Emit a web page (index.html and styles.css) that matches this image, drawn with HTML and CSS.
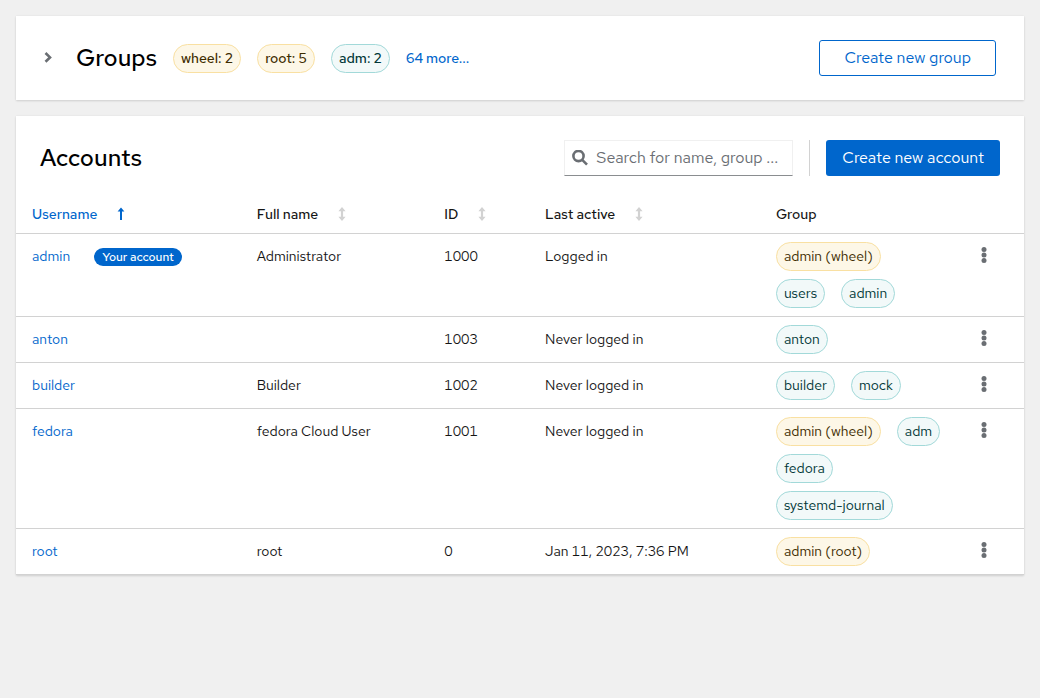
FILE: index.html
```html
<!DOCTYPE html>
<html lang="en">
<head>
<meta charset="utf-8">
<meta name="viewport" content="width=device-width, initial-scale=1">
<title>Accounts</title>
<link rel="stylesheet" href="styles.css">
</head>
<body>
<svg class="sprite" aria-hidden="true">
  <symbol id="sort" viewBox="0 0 8 16"><path d="M4 0 7.6 4.2H5.1V9.8H7.6L4 14 .4 9.8H2.9V4.2H.4z"/></symbol>
  <symbol id="sort-up" viewBox="0 0 8 16"><path d="M4 0.4 7.4 4.4H5V13H3V4.4H0.6z"/></symbol>
  <symbol id="kebab" viewBox="0 0 6 20"><circle cx="3" cy="3.5" r="2.5"/><circle cx="3" cy="9" r="2.5"/><circle cx="3" cy="14.5" r="2.5"/></symbol>
</svg>
<main class="page">
  <section class="card groups">
    <button class="toggle" type="button" aria-label="Show groups"><svg viewBox="0 0 8 12"><path d="M1.5 1 6 5.4 1.5 9.8"/></svg></button>
    <h2 class="title">Groups</h2>
    <div class="summary">
      <span class="label gold">wheel: 2</span>
      <span class="label gold">root: 5</span>
      <span class="label cyan">adm: 2</span>
      <button class="more" type="button">64 more...</button>
    </div>
    <button class="btn secondary" type="button">Create new group</button>
  </section>

  <section class="card">
    <div class="toolbar">
      <h2 class="title">Accounts</h2>
      <label class="search">
        <svg viewBox="0 0 16 16" aria-hidden="true"><circle cx="6.5" cy="6" r="5.1"/><path d="M10.2 9.8 15 14.6"/></svg>
        <input type="text" aria-label="Search for name, group or ID" placeholder="Search for name, group ...">
      </label>
      <span class="divider"></span>
      <button class="btn primary" type="button">Create new account</button>
    </div>
    <table class="accounts">
      <colgroup><col class="c-user"><col class="c-name"><col class="c-id"><col class="c-active"><col class="c-group"><col></colgroup>
      <thead>
        <tr>
          <th aria-sort="ascending"><button class="sort active" type="button">Username<svg><use href="#sort-up"/></svg></button></th>
          <th><button class="sort" type="button">Full name<svg><use href="#sort"/></svg></button></th>
          <th><button class="sort" type="button">ID<svg><use href="#sort"/></svg></button></th>
          <th><button class="sort" type="button">Last active<svg><use href="#sort"/></svg></button></th>
          <th>Group</th>
          <th></th>
        </tr>
      </thead>
      <tbody>
        <tr>
          <td><div class="user"><a href="#admin">admin</a><span class="badge">Your account</span></div></td>
          <td>Administrator</td><td>1000</td><td>Logged in</td>
          <td class="cell-labels"><div class="labels"><span class="label gold">admin (wheel)</span><span class="label cyan">users</span><span class="label cyan">admin</span></div></td>
          <td class="actions"><button class="kebab" type="button" aria-label="Actions for admin"><svg><use href="#kebab"/></svg></button></td>
        </tr>
        <tr>
          <td><a href="#anton">anton</a></td>
          <td></td><td>1003</td><td>Never logged in</td>
          <td class="cell-labels"><div class="labels"><span class="label cyan">anton</span></div></td>
          <td class="actions"><button class="kebab" type="button" aria-label="Actions for anton"><svg><use href="#kebab"/></svg></button></td>
        </tr>
        <tr>
          <td><a href="#builder">builder</a></td>
          <td>Builder</td><td>1002</td><td>Never logged in</td>
          <td class="cell-labels"><div class="labels"><span class="label cyan">builder</span><span class="label cyan">mock</span></div></td>
          <td class="actions"><button class="kebab" type="button" aria-label="Actions for builder"><svg><use href="#kebab"/></svg></button></td>
        </tr>
        <tr>
          <td><a href="#fedora">fedora</a></td>
          <td>fedora Cloud User</td><td>1001</td><td>Never logged in</td>
          <td class="cell-labels"><div class="labels"><span class="label gold">admin (wheel)</span><span class="label cyan">adm</span><span class="label cyan">fedora</span><span class="label cyan">systemd-journal</span></div></td>
          <td class="actions"><button class="kebab" type="button" aria-label="Actions for fedora"><svg><use href="#kebab"/></svg></button></td>
        </tr>
        <tr>
          <td><a href="#root">root</a></td>
          <td>root</td><td>0</td><td>Jan 11, 2023, 7:36 PM</td>
          <td class="cell-labels"><div class="labels"><span class="label gold">admin (root)</span></div></td>
          <td class="actions"><button class="kebab" type="button" aria-label="Actions for root"><svg><use href="#kebab"/></svg></button></td>
        </tr>
      </tbody>
    </table>
  </section>
</main>
</body>
</html>
```
FILE: styles.css
```css
* { box-sizing: border-box; }

body {
  margin: 0;
  background: #f0f0f0;
  color: #151515;
  font: 14px/21px "Red Hat Text", "Noto Sans", sans-serif;
  font-variant-numeric: tabular-nums;
}

button, input { font: inherit; }

button {
  padding: 0;
  border: 0;
  background: none;
  color: inherit;
  cursor: pointer;
}

a { color: #06c; text-decoration: none; }

.sprite { display: none; }

.page {
  display: flex;
  flex-direction: column;
  gap: 16px;
  padding: 16px;
}

.card {
  background: #fff;
  box-shadow: 0 1px 2px rgba(3, 3, 3, 0.12), 0 0 2px rgba(3, 3, 3, 0.06);
}

.groups {
  display: flex;
  align-items: center;
  gap: 16px;
  padding: 24px 28px 24px 16px;
  font-weight: 500;
}

.toggle {
  display: flex;
  justify-content: flex-end;
  width: 28px;
  padding: 8px 8px 8px 0;
}

.toggle svg {
  width: 8px;
  height: 12px;
  fill: none;
  stroke: #6a6e73;
  stroke-width: 2.6;
}

.title {
  margin: 0;
  color: #000;
  font-size: 24px;
  font-weight: 500;
  line-height: 36px;
}

.summary {
  display: flex;
  flex: 1;
  align-items: center;
  gap: 16px;
}

.more { color: #06c; }

.label {
  padding: 3px 7px;
  border: 1px solid;
  border-radius: 15px;
  white-space: nowrap;
}

.gold { border-color: #f9e0a2; background: #fdf7e7; color: #3d2c00; }
.cyan { border-color: #a2d9d9; background: #f2f9f9; color: #003737; }

.btn {
  height: 36px;
  border-radius: 3px;
  font-size: 16px;
  font-weight: 400;
  line-height: 24px;
  white-space: nowrap;
}

.primary { padding: 0 16px; background: #06c; color: #fff; }
.secondary { padding: 0 24px; border: 1px solid #06c; color: #06c; }

.toolbar {
  display: flex;
  align-items: center;
  gap: 16px;
  padding: 24px 24px 16px;
}

.toolbar .title { flex: 1; }

.search {
  display: flex;
  align-items: center;
  gap: 8px;
  width: 229px;
  height: 36px;
  padding: 0 8px 0 7px;
  border: 1px solid #f0f0f0;
  border-bottom-color: #8a8d90;
}

.search svg {
  flex: none;
  width: 16px;
  height: 16px;
  fill: none;
  stroke: #6a6e73;
  stroke-width: 2.6;
}

.search input {
  flex: 1;
  min-width: 0;
  height: 24px;
  padding: 0;
  border: 0;
  outline: 0;
  background: none;
  font-size: 16px;
  line-height: 24px;
}

.search input::placeholder { color: #6a6e73; opacity: 1; }

.divider { width: 1px; height: 36px; background: #d2d2d2; }

.accounts {
  width: 100%;
  border-collapse: collapse;
  table-layout: fixed;
}

.c-user { width: 22.3%; }
.c-name { width: 18.6%; }
.c-id { width: 10%; }
.c-active { width: 22.9%; }
.c-group { width: 19.8%; }

.accounts tr { border-bottom: 1px solid #d2d2d2; }

.accounts th {
  padding: 12px 16px 8px;
  font-weight: 500;
  text-align: left;
}

.accounts td {
  padding: 12px 16px;
  vertical-align: top;
}

.accounts .cell-labels { padding: 8px 16px; }
.accounts .actions { padding: 12px 16px 0 22px; }

.sort {
  display: flex;
  align-items: center;
  gap: 20px;
  font-weight: 500;
}

.sort svg { width: 8px; height: 16px; fill: #d2d2d2; }
.sort.active { color: #06c; }
.sort.active svg { fill: #06c; }

.user { display: flex; align-items: center; gap: 24px; }

.badge {
  padding: 0 8px;
  border-radius: 9px;
  background: #06c;
  color: #fff;
  font-size: 12px;
  font-weight: 500;
  line-height: 18px;
}

.labels { display: flex; flex-wrap: wrap; gap: 8px 16px; }

.kebab { display: block; }
.kebab svg { display: block; width: 6px; height: 20px; fill: #6a6e73; }
```
